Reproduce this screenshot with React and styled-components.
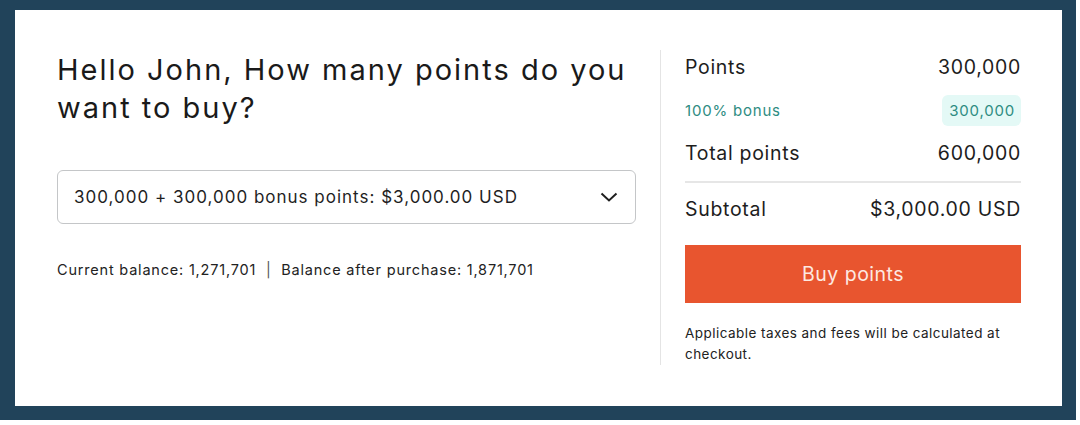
import React from 'react';
import styled, { createGlobalStyle } from 'styled-components';

const GlobalStyle = createGlobalStyle`
  html, body {
    margin: 0;
    padding: 0;
    background: #ffffff;
  }
  body {
    font-family: Inter, 'Noto Sans', sans-serif;
    color: #1d1d1d;
  }
`;

const Frame = styled.div`
  width: 1076px;
  height: 420px;
  box-sizing: border-box;
  background: #21435a;
  padding: 10px 14px 14px 15px;
`;

const Card = styled.div`
  height: 100%;
  box-sizing: border-box;
  background: #ffffff;
  display: grid;
  grid-template-columns: 579px 1px 336px;
  column-gap: 24px;
  padding: 40px 40px 40px 42px;
`;

const Left = styled.div`
  display: flex;
  flex-direction: column;
`;

const Heading = styled.h1`
  margin: 1px 0 0;
  font-size: 29px;
  line-height: 38px;
  font-weight: 400;
  color: #1a1a1a;
  letter-spacing: 2px;
`;

const Select = styled.div`
  margin-top: 43px;
  height: 54px;
  box-sizing: border-box;
  border: 1px solid #c4c6c8;
  border-radius: 6px;
  display: flex;
  align-items: center;
  justify-content: space-between;
  padding: 0 16px 0 16px;
  font-size: 17px;
  letter-spacing: 1px;
  color: #1f1f1f;
`;

const Balance = styled.p`
  margin: 37px 0 0;
  font-size: 14.5px;
  letter-spacing: 0.8px;
  color: #222;
`;

const Sep = styled.span`
  color: #555;
`;

const Divider = styled.div`
  background: #e4e4e4;
  height: 315px;
`;

const Right = styled.div`
  display: flex;
  flex-direction: column;
`;

const Row = styled.div`
  display: flex;
  justify-content: space-between;
  align-items: center;
  height: ${p => p.h || 44}px;
  font-size: ${p => (p.small ? 15 : 19.5)}px;
  letter-spacing: ${p => (p.small ? 0.8 : 0.7)}px;
  color: ${p => (p.small ? '#2e8c82' : '#1d1d1d')};
`;

const Badge = styled.span`
  background: #e4f9f6;
  border-radius: 6px;
  padding: 6px 6px 6px 7px;
  line-height: 19px;
`;

const Rule = styled.hr`
  border: none;
  border-top: 2px solid #e6e6e6;
  margin: 11px 0 4px;
  width: 100%;
`;

const BuyButton = styled.button`
  margin-top: 14px;
  height: 58px;
  border: none;
  background: #e8552f;
  color: #fde9e1;
  font-family: inherit;
  font-size: 19.5px;
  letter-spacing: 0.5px;
  cursor: pointer;
`;

const Note = styled.p`
  margin: 20px 0 0;
  font-size: 13.5px;
  line-height: 21px;
  letter-spacing: 0.45px;
  color: #222;
`;

const Chevron = () => (
  <svg width="20" height="20" viewBox="0 0 20 20" fill="none">
    <path d="M2.5 6.5 L10 13.5 L17.5 6.5" stroke="#1f1f1f" strokeWidth="2" />
  </svg>
);

export default function App() {
  return (
    <>
      <GlobalStyle />
      <Frame>
        <Card>
          <Left>
            <Heading>Hello John, How many points do you want to buy?</Heading>
            <Select>
              <span>300,000 + 300,000 bonus points: $3,000.00 USD</span>
              <Chevron />
            </Select>
            <Balance>
              Current balance: 1,271,701 &nbsp;<Sep>|</Sep>&nbsp; Balance after purchase: 1,871,701
            </Balance>
          </Left>
          <Divider />
          <Right>
            <Row h={34}>
              <span>Points</span>
              <span>300,000</span>
            </Row>
            <Row small h={52}>
              <span>100% bonus</span>
              <Badge>300,000</Badge>
            </Row>
            <Row h={34}>
              <span>Total points</span>
              <span>600,000</span>
            </Row>
            <Rule />
            <Row h={44}>
              <span>Subtotal</span>
              <span>$3,000.00 USD</span>
            </Row>
            <BuyButton>Buy points</BuyButton>
            <Note>Applicable taxes and fees will be calculated at checkout.</Note>
          </Right>
        </Card>
      </Frame>
    </>
  );
}
